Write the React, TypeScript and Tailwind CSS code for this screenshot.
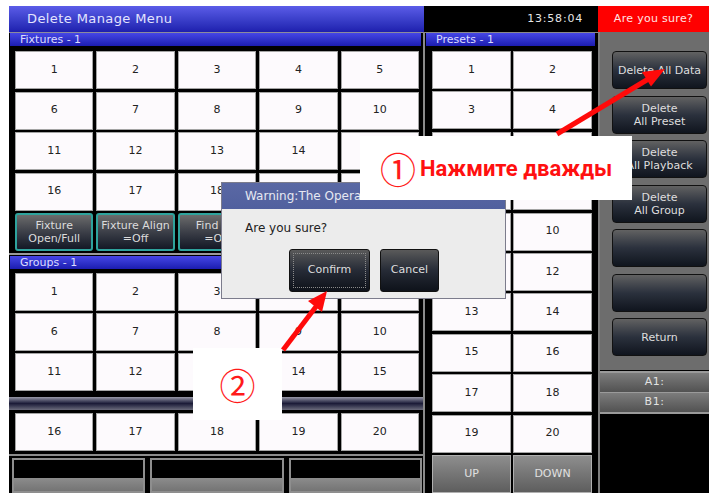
import React from "react";

const fixtureRows = [
  [1, 2, 3, 4, 5],
  [6, 7, 8, 9, 10],
  [11, 12, 13, 14, 15],
  [16, 17, 18, 19, 20],
];

const functionKeys: [string, string][] = [
  ["Fixture", "Open/Full"],
  ["Fixture Align", "=Off"],
  ["Find Me", "=Off"],
  ["Auto Mode", "=Off"],
  ["Fixture Ctrl", "=Off"],
];

const sideKeys: string[][] = [
  ["Delete All Data"],
  ["Delete", "All Preset"],
  ["Delete", "All Playback"],
  ["Delete", "All Group"],
  [],
  [],
  ["Return"],
];

function NumCell({ n }: { n: number | string }) {
  return (
    <div className="flex items-center justify-center border border-[#a4a4a4] bg-[#fdfafd] text-[11px] text-[#222]">
      {n}
    </div>
  );
}

function FuncKey({ top, bottom }: { top: string; bottom: string }) {
  return (
    <div className="flex flex-col items-center justify-center rounded-[3px] border-2 border-[#2ea39d] bg-linear-to-b from-[#6c6c6c] via-[#3c3f48] via-50% to-[#141926] text-[11px] leading-[13px] text-[#dcdcdc] whitespace-nowrap overflow-hidden">
      <span>{top}</span>
      <span>{bottom}</span>
    </div>
  );
}

function SideKey({ lines }: { lines: string[] }) {
  return (
    <div className="flex h-[38px] flex-col items-center justify-center rounded-[4px] border border-[#111] bg-linear-to-b from-[#626262] via-[#2b313d] via-50% to-[#10151e] text-[11px] leading-[13px] text-[#dedede]">
      {lines.map((l) => (
        <span key={l}>{l}</span>
      ))}
    </div>
  );
}

function PanelHeader({ title }: { title: string }) {
  return (
    <div className="flex h-[13px] items-center bg-linear-to-b from-[#4646e6] to-[#1c1cb0] pl-[10px] text-[11px] leading-none text-[#dcdcff]">
      {title}
    </div>
  );
}

function BottomSlot() {
  return (
    <div className="flex flex-1 flex-col border-2 border-[#8e8e8e]">
      <div className="h-[18px] bg-black" />
      <div className="flex-1 bg-linear-to-b from-[#8c8c8c] to-[#747474]" />
    </div>
  );
}

export default function App() {
  return (
    <div className="relative h-[493px] w-[709px] overflow-hidden bg-white pl-[9px] pt-[6px] font-['DejaVu_Sans',sans-serif]">
      <div className="flex h-[487px] w-[700px] flex-col bg-black">
        {/* top bar */}
        <div className="flex h-[26px]">
          <div className="flex w-[415px] items-center bg-linear-to-b from-[#5c5ce8] to-[#1f1fae] pl-[18px] text-[13px] tracking-[0.4px] text-[#e4e4ff]">
            Delete Manage Menu
          </div>
          <div className="flex w-[174px] items-center justify-end bg-black pr-[15px] text-[11px] tracking-[0.8px] text-[#e6e6e6]">
            13:58:04
          </div>
          <div className="flex flex-1 items-center justify-center bg-[#ff0000] text-[11px] tracking-[0.3px] text-[#ffe4e4]">
            Are you sure?
          </div>
        </div>

        {/* work area */}
        <div className="flex flex-1">
          {/* fixtures + groups */}
          <div className="flex w-[414px] flex-col border-t border-[#8c8c9c]">
            <div className="ml-[1px] mr-[2px]">
              <PanelHeader title="Fixtures - 1" />
            </div>
            <div className="mt-[5px] grid w-[404px] grid-cols-5 auto-rows-[38px] gap-x-[3px] gap-y-[2.5px] ml-[6px]">
              {fixtureRows.flat().map((n) => (
                <NumCell key={n} n={n} />
              ))}
              {functionKeys.map(([a, b]) => (
                <FuncKey key={a} top={a} bottom={b} />
              ))}
            </div>

            <div className="mt-[2px] border-t-2 border-[#9a9a9a]" />
            <div className="ml-[1px] mr-[2px] mt-[1px]">
              <PanelHeader title="Groups - 1" />
            </div>
            <div className="mt-[4px] ml-[6px] grid w-[404px] grid-cols-5 auto-rows-[38px] gap-x-[3px] gap-y-[2px]">
              {fixtureRows.slice(0, 3).flat().map((n) => (
                <NumCell key={n} n={n} />
              ))}
            </div>
            <div className="mt-[6px] h-[13px] bg-linear-to-b from-[#9a9aa8] via-[#1c1c38] to-[#6c6c7c]" />
            <div className="mt-[3px] ml-[6px] grid w-[404px] grid-cols-5 auto-rows-[38px] gap-x-[3px]">
              {fixtureRows[3].map((n) => (
                <NumCell key={n} n={n} />
              ))}
            </div>
            <div className="mt-[3px] border-t-2 border-[#8c8c8c]" />
            <div className="mt-[2px] flex flex-1 gap-[5px] pl-[3px] pr-[1px]">
              <BottomSlot />
              <BottomSlot />
              <BottomSlot />
            </div>
          </div>

          {/* presets */}
          <div className="flex w-[175px] flex-col border-l-2 border-t border-[#8a8a8a]">
            <div className="ml-[1px] mr-[3px]">
              <PanelHeader title="Presets - 1" />
            </div>
            <div className="ml-[7px] mt-[5px] grid w-[160px] grid-cols-2 auto-rows-[38px] gap-x-[2px] gap-y-[2.4px]">
              {Array.from({ length: 20 }, (_, i) => (
                <NumCell key={i} n={i + 1} />
              ))}
              {["UP", "DOWN"].map((t) => (
                <div
                  key={t}
                  className="flex items-center justify-center border border-[#b0b0b0] bg-linear-to-b from-[#8e8e8e] to-[#5e5e5e] text-[11px] text-[#e0e0e0]"
                >
                  {t}
                </div>
              ))}
            </div>
          </div>

          {/* side keys */}
          <div className="flex flex-1 flex-col border-l-2 border-[#7e7e7e] bg-black">
            <div className="flex h-[338px] flex-col gap-[6.5px] bg-[#6d6d6d] pl-[12px] pr-[2px] pt-[19px]">
              {sideKeys.map((lines, i) => (
                <SideKey key={i} lines={lines} />
              ))}
            </div>
            <div className="mt-[1px] flex flex-col gap-[1px] border-y-2 border-[#9a9a9a] bg-[#9a9a9a]">
              {["A1:", "B1:"].map((t) => (
                <div
                  key={t}
                  className="flex h-[19px] items-center justify-center bg-linear-to-b from-[#7c7c7c] to-[#525252] text-[11px] tracking-[0.5px] text-[#e2e2e2]"
                >
                  {t}
                </div>
              ))}
            </div>
          </div>
        </div>
      </div>

      {/* confirmation dialog */}
      <div className="absolute left-[221px] top-[182px] flex h-[117px] w-[285px] flex-col border border-[#7c7c8c] bg-[#ececec]">
        <div className="flex h-[26px] items-center bg-linear-to-b from-[#5a68a4] to-[#51609e] pl-[23px] text-[12px] text-[#e6e8f2] whitespace-nowrap overflow-hidden">
          Warning:The Operation Will Clear All Data!
        </div>
        <div className="mt-[10px] pl-[23px] text-[12px] text-[#222]">Are you sure?</div>
        <div className="mt-[12px] flex gap-[10px] pl-[67px]">
          <div className="relative flex h-[43px] w-[81px] items-center justify-center rounded-[3px] border border-[#111] bg-linear-to-b from-[#5a5a5a] via-[#262b36] via-50% to-[#0e121a] text-[11px] text-[#dedede]">
            <div className="absolute inset-[3px] border border-dotted border-[#8a8a8a]" />
            Confirm
          </div>
          <div className="flex h-[43px] w-[59px] items-center justify-center rounded-[3px] border border-[#111] bg-linear-to-b from-[#5a5a5a] via-[#262b36] via-50% to-[#0e121a] text-[11px] text-[#dedede]">
            Cancel
          </div>
        </div>
      </div>

      {/* step labels */}
      <div className="absolute left-[360px] top-[136px] flex h-[64px] w-[272px] items-center bg-white pl-[20px]">
        <span className="font-['Noto_Sans_CJK_SC',sans-serif] text-[36px] leading-none text-[#ff1a1a]">①</span>
        <span className="ml-[4px] font-['Roboto',sans-serif] text-[22px] font-bold text-[#ff1010]">Нажмите дважды</span>
      </div>
      <div className="absolute left-[193px] top-[348px] flex h-[72px] w-[89px] items-center justify-center bg-white">
        <span className="font-['Noto_Sans_CJK_SC',sans-serif] text-[36px] leading-none text-[#ff1a1a]">②</span>
      </div>

      {/* pointer arrows */}
      <svg className="pointer-events-none absolute left-0 top-0" width="709" height="493" viewBox="0 0 709 493">
        <line x1="557" y1="134" x2="650" y2="78" stroke="#ff0a0a" strokeWidth="5" />
        <polygon points="665,69 651,86.5 642,72" fill="#ff0a0a" />
        <line x1="283" y1="350" x2="318" y2="304" stroke="#ff0a0a" strokeWidth="5" />
        <polygon points="327,291 322,312 308,301" fill="#ff0a0a" />
      </svg>
    </div>
  );
}
